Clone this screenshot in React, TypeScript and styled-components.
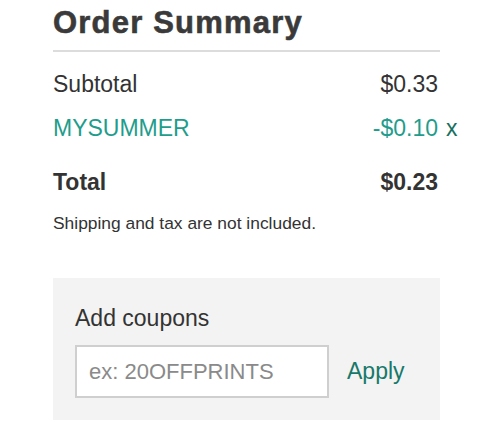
import React from "react";
import styled, { createGlobalStyle } from "styled-components";

const GlobalStyle = createGlobalStyle`
  body {
    margin: 0;
    background: #fff;
    font-family: "Liberation Sans", Arial, Helvetica, sans-serif;
    color: #333;
  }
`;

type Line = { label: string; amount: string; kind?: "discount" | "total" };

const lines: Line[] = [
  { label: "Subtotal", amount: "$0.33" },
  { label: "MYSUMMER", amount: "-$0.10", kind: "discount" },
  { label: "Total", amount: "$0.23", kind: "total" },
];

export default function App() {
  return (
    <>
      <GlobalStyle />
      <SContainer>
        <STitle>Order Summary</STitle>
        <SRows>
          {lines.map((line) => (
            <SRow key={line.label} kind={line.kind}>
              <span>{line.label}</span>
              <SAmount>
                {line.amount}
                {line.kind === "discount" && <SRemove>x</SRemove>}
              </SAmount>
            </SRow>
          ))}
        </SRows>
        <SNote>Shipping and tax are not included.</SNote>
        <SCoupon>
          <SCouponLabel>Add coupons</SCouponLabel>
          <SCouponForm>
            <SInput placeholder="ex: 20OFFPRINTS" />
            <SApply type="button">Apply</SApply>
          </SCouponForm>
        </SCoupon>
      </SContainer>
    </>
  );
}

const SContainer = styled.div`
  width: 387px;
  padding: 5px 0 0 53px;
`;

const STitle = styled.h1`
  margin: 0;
  padding-bottom: 9px;
  border-bottom: 2px solid #dcdcdc;
  font-size: 31px;
  line-height: 36px;
  font-weight: 700;
  letter-spacing: 1.2px;
  -webkit-text-stroke: 0.6px #3a3a3a;
  color: #3a3a3a;
`;

const SRows = styled.div`
  display: flex;
  flex-direction: column;
  gap: 14px;
  margin-top: 17px;
`;

const SRow = styled.div<{ kind?: "discount" | "total" }>`
  display: flex;
  justify-content: space-between;
  padding-right: 2px;
  font-size: 23px;
  line-height: 30px;
  font-weight: ${(p) => (p.kind === "total" ? 700 : 400)};
  color: ${(p) => (p.kind === "discount" ? "#1f9d8c" : "#333")};
  margin-top: ${(p) => (p.kind === "total" ? "10px" : "0")};
`;

const SAmount = styled.span`
  position: relative;
`;

const SRemove = styled.span`
  position: absolute;
  left: 100%;
  margin-left: 8px;
  color: #17705f;
  cursor: pointer;
`;

const SNote = styled.p`
  margin: 15px 0 0;
  font-size: 17.4px;
  line-height: 22px;
  color: #333;
`;

const SCoupon = styled.div`
  margin-top: 44px;
  padding: 25px 22px 22px;
  background: #f3f3f3;
`;

const SCouponLabel = styled.div`
  font-size: 23px;
  line-height: 30px;
  color: #333;
`;

const SCouponForm = styled.div`
  display: flex;
  align-items: center;
  gap: 18px;
  margin-top: 12px;
`;

const SInput = styled.input`
  box-sizing: border-box;
  width: 254px;
  height: 53px;
  padding: 0 12px;
  border: 2px solid #cfcfcf;
  background: #fff;
  font-family: "Liberation Sans", Arial, sans-serif;
  font-size: 22px;
  color: #333;
  outline: none;

  &::placeholder {
    color: #8a8a8a;
  }
`;

const SApply = styled.button`
  padding: 0;
  border: none;
  background: none;
  font-family: "Liberation Sans", Arial, sans-serif;
  font-size: 23px;
  color: #17796a;
  cursor: pointer;
`;
